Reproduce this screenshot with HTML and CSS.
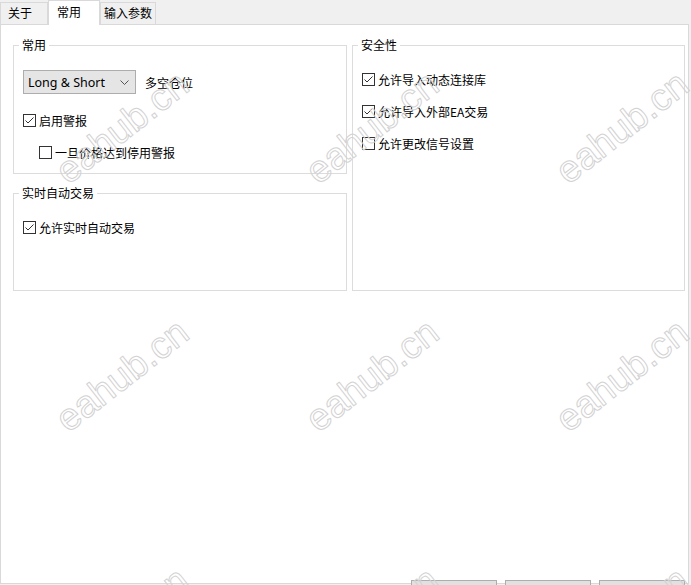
FILE: index.html
```html
<!DOCTYPE html>
<html lang="zh-CN">
<head>
    <meta charset="UTF-8">
    <title>常用</title>
    <link rel="stylesheet" href="styles.css">
</head>
<body>
    <div class="window">
        <div class="tabs">
            <div class="tab tab-about">关于</div>
            <div class="tab tab-common active">常用</div>
            <div class="tab tab-inputs">输入参数</div>
        </div>

        <div class="page">
            <div class="columns">
                <div class="col-left">
                    <fieldset class="group group-common">
                        <legend>常用</legend>
                        <div class="row-combo">
                            <div class="combo">
                                <span>Long &amp; Short</span>
                                <svg class="chevron" width="9" height="5" viewBox="0 0 9 5"><path d="M0.5 0.5 L4.5 4.5 L8.5 0.5" fill="none" stroke="#555" stroke-width="1"/></svg>
                            </div>
                            <span class="combo-label">多空仓位</span>
                        </div>
                        <label class="check first">
                            <span class="box checked"><svg width="11" height="11" viewBox="0 0 11 11"><path d="M1.5 5.5 L4 8 L9.5 2.5" fill="none" stroke="#333" stroke-width="1"/></svg></span>
                            <span>启用警报</span>
                        </label>
                        <label class="check indent">
                            <span class="box"></span>
                            <span>一旦价格达到停用警报</span>
                        </label>
                    </fieldset>

                    <fieldset class="group group-live">
                        <legend>实时自动交易</legend>
                        <label class="check first">
                            <span class="box checked"><svg width="11" height="11" viewBox="0 0 11 11"><path d="M1.5 5.5 L4 8 L9.5 2.5" fill="none" stroke="#333" stroke-width="1"/></svg></span>
                            <span>允许实时自动交易</span>
                        </label>
                    </fieldset>
                </div>

                <fieldset class="group group-security">
                    <legend>安全性</legend>
                    <label class="check first">
                        <span class="box checked"><svg width="11" height="11" viewBox="0 0 11 11"><path d="M1.5 5.5 L4 8 L9.5 2.5" fill="none" stroke="#333" stroke-width="1"/></svg></span>
                        <span>允许导入动态连接库</span>
                    </label>
                    <label class="check">
                        <span class="box checked"><svg width="11" height="11" viewBox="0 0 11 11"><path d="M1.5 5.5 L4 8 L9.5 2.5" fill="none" stroke="#333" stroke-width="1"/></svg></span>
                        <span>允许导入外部EA交易</span>
                    </label>
                    <label class="check">
                        <span class="box"></span>
                        <span>允许更改信号设置</span>
                    </label>
                </fieldset>
            </div>
        </div>

        <div class="buttons">
            <button class="btn"></button>
            <button class="btn"></button>
            <button class="btn"></button>
        </div>

        <!-- site watermark -->
        <div class="watermarks">
            <span class="mark">eahub.cn</span>
            <span class="mark">eahub.cn</span>
            <span class="mark">eahub.cn</span>
            <span class="mark">eahub.cn</span>
            <span class="mark">eahub.cn</span>
            <span class="mark">eahub.cn</span>
            <span class="mark">eahub.cn</span>
            <span class="mark">eahub.cn</span>
            <span class="mark">eahub.cn</span>
        </div>
    </div>
</body>
</html>
```

FILE: styles.css
```css
body {
    margin: 0;
    background-color: #f0f0f0;
    font-family: "Noto Sans CJK SC", "Noto Sans", sans-serif;
    font-size: 12px;
    color: #000;
}
.window {
    position: relative;
    width: 691px;
    height: 585px;
    overflow: hidden;
}

/* tab strip */
.tabs {
    display: flex;
    align-items: flex-end;
    height: 24px;
}
.tab {
    box-sizing: border-box;
    height: 22px;
    line-height: 20px;
    border: 1px solid #d9d9d9;
    border-bottom: none;
    background-color: #f0f0f0;
    white-space: nowrap;
}
.tab-about {
    width: 48px;
    padding-left: 7px;
}
.tab-common {
    width: 52px;
    padding-left: 8px;
}
.tab-inputs {
    width: 56px;
    padding-left: 3px;
}
.tab.active {
    height: 25px;
    line-height: 22px;
    margin-bottom: -1px;
    background-color: #fff;
}

/* page body */
.page {
    box-sizing: border-box;
    width: 689px;
    height: 560px;
    border: 1px solid #d9d9d9;
    background-color: #fff;
    padding: 12px 3px 0 12px;
}
.columns {
    display: flex;
    gap: 5px;
}
.col-left {
    width: 334px;
    display: flex;
    flex-direction: column;
    gap: 11px;
}
.group {
    box-sizing: border-box;
    margin: 0;
    min-width: 0;
    padding: 0 9px;
    border: 1px solid #dcdcdc;
}
.group legend {
    margin-left: -4px;
    padding: 0 3px;
    line-height: 16px;
}
.group-common {
    height: 137px;
}
.group-live {
    height: 106px;
}
.group-security {
    flex: 1;
}

/* combo box */
.row-combo {
    display: flex;
    align-items: center;
    margin-top: 17px;
}
.combo {
    box-sizing: border-box;
    display: flex;
    align-items: center;
    justify-content: space-between;
    width: 113px;
    height: 24px;
    padding: 0 6px 0 4px;
    border: 1px solid #adadad;
    background-color: #e5e5e5;
    font-family: "Noto Sans", "Open Sans", sans-serif;
    font-size: 12.5px;
}
.combo-label {
    margin-left: 9px;
}

/* checkboxes */
.check {
    display: flex;
    align-items: center;
    gap: 3px;
    height: 16px;
    margin-top: 16px;
    white-space: nowrap;
}
.check.first {
    margin-top: 18px;
}
.check.indent {
    margin-left: 16px;
}
.box {
    box-sizing: border-box;
    display: flex;
    flex: none;
    width: 13px;
    height: 13px;
    border: 1px solid #333;
    background-color: #fff;
}

/* dialog buttons */
.buttons {
    display: flex;
    justify-content: flex-end;
    gap: 8px;
    margin-top: -4px;
    padding-right: 6px;
}
.btn {
    width: 86px;
    height: 24px;
    border: 1px solid #adadad;
    background-color: #e1e1e1;
}

/* watermark */
.watermarks {
    position: absolute;
    left: -3px;
    top: 3px;
    display: grid;
    grid-template-columns: repeat(3, 250px);
    grid-template-rows: repeat(3, 248px);
    place-items: center;
    pointer-events: none;
}
.mark {
    transform: rotate(-38deg);
    font-family: "Liberation Sans", Arial, sans-serif;
    font-size: 38px;
    color: transparent;
    -webkit-text-stroke: 1px #d2d2d2;
    white-space: nowrap;
}
```
